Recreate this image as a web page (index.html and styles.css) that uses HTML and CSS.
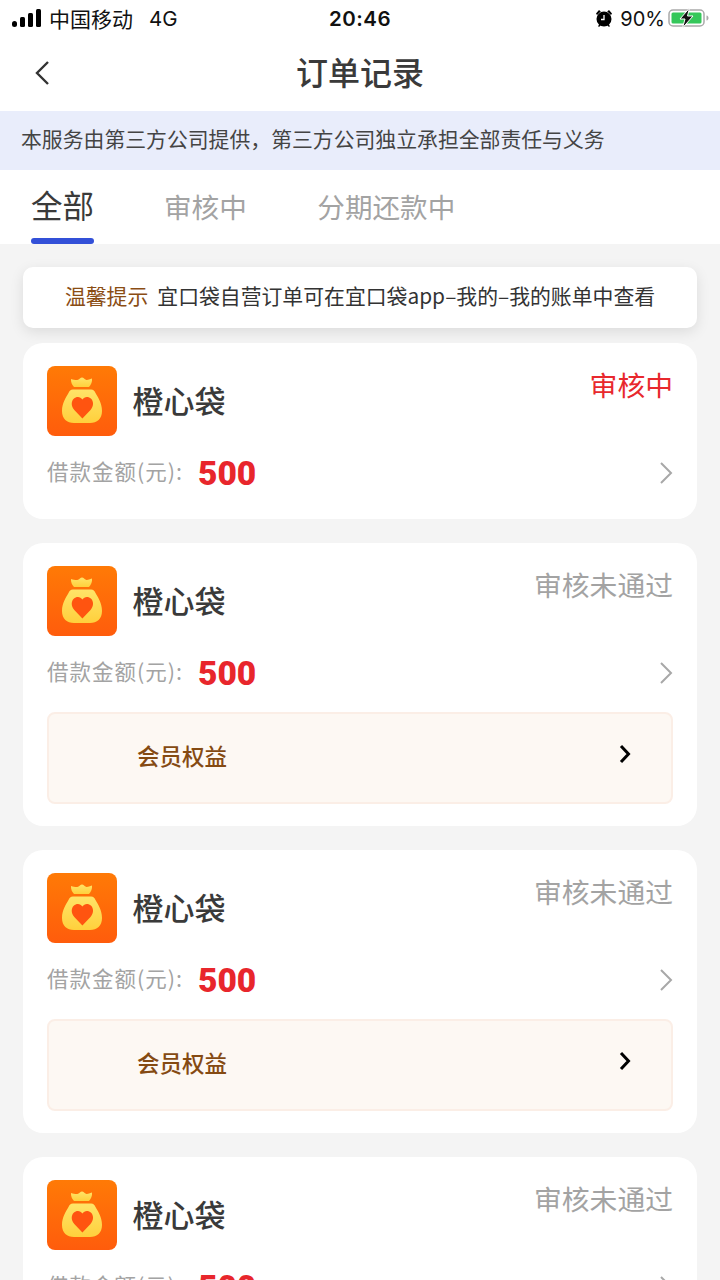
FILE: index.html
```html
<!DOCTYPE html>
<html lang="zh-CN">
<head>
<meta charset="utf-8">
<title>订单记录</title>
<link rel="stylesheet" href="styles.css">
</head>
<body>
<svg class="defs" width="0" height="0">
  <defs>
    <linearGradient id="bg" x1="0" y1="0" x2="0" y2="1"><stop offset="0" stop-color="#ff7a06"/><stop offset="1" stop-color="#ff5c0c"/></linearGradient>
    <linearGradient id="bag" x1="0" y1="0" x2="0" y2="1"><stop offset="0" stop-color="#ffe468"/><stop offset="1" stop-color="#ffd03c"/></linearGradient>
    <symbol id="logo" viewBox="0 0 70 70">
      <rect width="70" height="70" rx="8" fill="url(#bg)"/>
      <path d="M24 13c3 .8 5.500 1.400 7 .8 1.400-.6 2.400-2.300 4-2.300s2.600 1.700 4 2.300c1.500.6 3-.4 6-1.300.4 3.500-1 6.500-3 8.500H27c-2-2-3.200-5-3-8z" fill="url(#bag)"/>
      <path d="M26 23.500h18c2.500 0 3.500 1.500 4.500 3.500C51 31.500 55 37 55 45c0 8-5 12-12 12H27c-7 0-12-4-12-12 0-8 4-13.500 6.500-18 1-2 2-3.500 4.500-3.500z" fill="url(#bag)"/>
      <path d="M35.400 52.500 27.300 44c-3.300-3.500-3.300-8.500-.6-11.200 2.700-2.700 6.700-2.500 8.700.7 2-3.200 6-3.400 8.700-.7 2.700 2.700 2.700 7.700-.6 11.200z" fill="#ff5410"/>
    </symbol>
    <symbol id="chev" viewBox="0 0 16 24">
      <path d="M3 2l10 10L3 22" fill="none" stroke="#a8a8a8" stroke-width="2"/>
    </symbol>
    <symbol id="chev-dark" viewBox="0 0 12 20">
      <path d="M2 2l7.500 8L2 18" fill="none" stroke="#000" stroke-width="3"/>
    </symbol>
  </defs>
</svg>
<div class="page">
  <header class="status">
    <div class="status-left">
      <svg class="signal" width="30" height="18" viewBox="0 0 30 18" aria-hidden="true">
        <rect x="0" y="12" width="5" height="6" rx="2.500" fill="#000"/>
        <rect x="8" y="8" width="5" height="10" rx="1.500" fill="#000"/>
        <rect x="16" y="4" width="5" height="14" rx="1.500" fill="#000"/>
        <rect x="24" y="0" width="5" height="18" rx="1.500" fill="#000"/>
      </svg>
      <span class="carrier">中国移动</span>
      <span class="net">4G</span>
    </div>
    <div class="clock">20:46</div>
    <div class="status-right">
      <svg class="alarm" width="18" height="18" viewBox="0 0 18 18" aria-hidden="true">
        <circle cx="9" cy="10" r="7.500" fill="#000"/>
        <path d="M1 4.500 4 1 5.800 2.500 2 6zM17 4.500 14 1 12.200 2.500 16 6zM3 17l2-2 1 1-2 2zM15 17l-2-2-1 1 2 2z" fill="#000"/>
        <path d="M9 6v4.500H6" fill="none" stroke="#fff" stroke-width="1.300"/>
      </svg>
      <span class="pct">90%</span>
      <svg class="battery" width="42" height="20" viewBox="0 0 42 20" aria-hidden="true">
        <rect x="1" y="2" width="35" height="16" rx="4" fill="#fff" stroke="#a9a9a9" stroke-width="1.500"/>
        <rect x="3.500" y="4.500" width="30" height="11" rx="1.500" fill="#35c75a"/>
        <path d="M38.500 7.500c1.500.3 2 1.300 2 2.500s-.5 2.200-2 2.500z" fill="#a9a9a9"/>
        <path d="M21.500 0 12 11h5l-2.500 9L25 8h-5.500z" fill="#111" stroke="#fff" stroke-width="1"/>
      </svg>
    </div>
  </header>

  <nav class="nav">
    <svg class="back" width="16" height="26" viewBox="0 0 16 26" aria-hidden="true">
      <path d="M14 2 3 13l11 11" fill="none" stroke="#333" stroke-width="2.400"/>
    </svg>
    <h1 class="title">订单记录</h1>
  </nav>

  <div class="banner">本服务由第三方公司提供，第三方公司独立承担全部责任与义务</div>

  <div class="tabs">
    <div class="tab tab-active">全部</div>
    <div class="tab tab-mid">审核中</div>
    <div class="tab">分期还款中</div>
  </div>

  <main class="list">
    <div class="notice"><span class="notice-tag">温馨提示</span><span>宜口袋自营订单可在宜口袋app–我的–我的账单中查看</span></div>

    <section class="card">
      <div class="head">
        <svg class="logo"><use href="#logo"/></svg>
        <span class="name">橙心袋</span>
        <span class="state state-red">审核中</span>
      </div>
      <div class="amount">
        <span class="label">借款金额(元):</span><span class="value">500</span>
        <svg class="chev"><use href="#chev"/></svg>
      </div>
    </section>

    <section class="card">
      <div class="head">
        <svg class="logo"><use href="#logo"/></svg>
        <span class="name">橙心袋</span>
        <span class="state">审核未通过</span>
      </div>
      <div class="amount">
        <span class="label">借款金额(元):</span><span class="value">500</span>
        <svg class="chev"><use href="#chev"/></svg>
      </div>
      <div class="perk"><span class="perk-text">会员权益</span><svg class="perk-chev"><use href="#chev-dark"/></svg></div>
    </section>

    <section class="card">
      <div class="head">
        <svg class="logo"><use href="#logo"/></svg>
        <span class="name">橙心袋</span>
        <span class="state">审核未通过</span>
      </div>
      <div class="amount">
        <span class="label">借款金额(元):</span><span class="value">500</span>
        <svg class="chev"><use href="#chev"/></svg>
      </div>
      <div class="perk"><span class="perk-text">会员权益</span><svg class="perk-chev"><use href="#chev-dark"/></svg></div>
    </section>

    <section class="card">
      <div class="head">
        <svg class="logo"><use href="#logo"/></svg>
        <span class="name">橙心袋</span>
        <span class="state">审核未通过</span>
      </div>
      <div class="amount">
        <span class="label">借款金额(元):</span><span class="value">500</span>
        <svg class="chev"><use href="#chev"/></svg>
      </div>
    </section>
  </main>
</div>
</body>
</html>
```
FILE: styles.css
```css
* { box-sizing: border-box; }
html, body { margin: 0; padding: 0; height: 1280px; overflow: hidden; }
body { background: #f4f4f4; font-family: "Noto Sans CJK SC", "Noto Sans", sans-serif; color: #333; }
.defs { display: block; height: 0; }
.page { width: 720px; height: 1280px; overflow: hidden; display: flex; flex-direction: column; }

.status { flex: none; height: 36px; background: #fff; display: flex; align-items: center; position: relative; padding: 0 10px 0 12px; justify-content: space-between; color: #111; }
.status-left { display: flex; align-items: center; }
.signal { margin-right: 7px; }
.carrier { font-size: 21px; line-height: 36px; }
.net { font-family: Inter, sans-serif; font-size: 20.500px; margin-left: 16px; }
.clock { position: absolute; left: 0; right: 0; top: 1px; text-align: center; font-family: Inter, sans-serif; font-weight: 600; font-size: 20.500px; line-height: 36px; letter-spacing: .5px; }
.status-right { display: flex; align-items: center; }
.alarm { margin-right: 7px; }
.pct { font-family: Inter, sans-serif; font-size: 20px; line-height: 36px; padding-top: 1px; margin-right: 3px; }

.nav { flex: none; height: 75px; background: #fff; display: flex; align-items: center; justify-content: center; position: relative; }
.back { position: absolute; left: 34px; top: 24px; }
.title { margin: 0 0 5px; font-size: 32px; font-weight: 500; color: #3a3a3a; line-height: 70px; }

.banner { flex: none; height: 59px; background: #e9edfb; padding-left: 21px; font-size: 20.850px; line-height: 55px; color: #444; }

.tabs { flex: none; height: 74px; background: #fff; display: flex; padding-left: 31px; align-items: flex-start; }
.tab { font-size: 27.600px; line-height: 72px; color: #a3a3a3; height: 74px; }
.tab-active { font-size: 31.500px; line-height: 68px; color: #3a3a3a; position: relative; }
.tab-active::after { content: ""; position: absolute; left: 0; right: 0; bottom: 0; height: 6px; border-radius: 3px; background: #3350d8; }
.tab-mid { margin-left: 70px; margin-right: 70.500px; }

.list { flex: 1; padding: 23px 23px 0; display: flex; flex-direction: column; }
.notice { height: 61px; flex: none; background: #fff; border-radius: 10px; box-shadow: 0 4px 14px rgba(0, 0, 0, .1); display: flex; align-items: center; justify-content: center; padding-bottom: 5px; font-size: 20.850px; color: #333; margin-bottom: -9px; }
.notice-tag { color: #8a4d14; margin-right: 9px; }

.card { flex: none; background: #fff; border-radius: 20px; margin-top: 24px; padding: 23px 24px 16px; }
.head { height: 70px; display: flex; align-items: flex-start; }
.logo { width: 70px; height: 70px; flex: none; }
.name { margin-left: 15.500px; font-size: 31px; line-height: 68px; font-weight: 500; color: #3a3a3a; }
.state { margin-left: auto; font-size: 27.800px; line-height: 36px; color: #a3a3a3; }
.state-red { color: #e8282d; }

.amount { height: 60px; margin-top: 7px; display: flex; align-items: center; }
.label { font-size: 21.500px; letter-spacing: 1px; color: #a3a3a3; width: 151px; line-height: 56px; margin-bottom: 4px; white-space: nowrap; }
.value { font-family: Roboto, sans-serif; font-weight: 900; font-size: 33.500px; color: #e8262c; line-height: 60px; padding-top: 2px; }
.chev { width: 16px; height: 24px; margin-left: auto; margin-right: -1px; }

.perk { height: 92px; margin-top: 9px; margin-bottom: 6px; border: 2px solid #fbeee6; border-radius: 8px; background: #fdf8f3; display: flex; align-items: center; padding: 0 40px 0 88px; justify-content: space-between; }
.perk-text { font-size: 22.500px; line-height: 86px; margin-bottom: 6px; font-weight: 500; color: #854a12; }
.perk-chev { width: 12px; height: 20px; margin-top: -8px; }
```
